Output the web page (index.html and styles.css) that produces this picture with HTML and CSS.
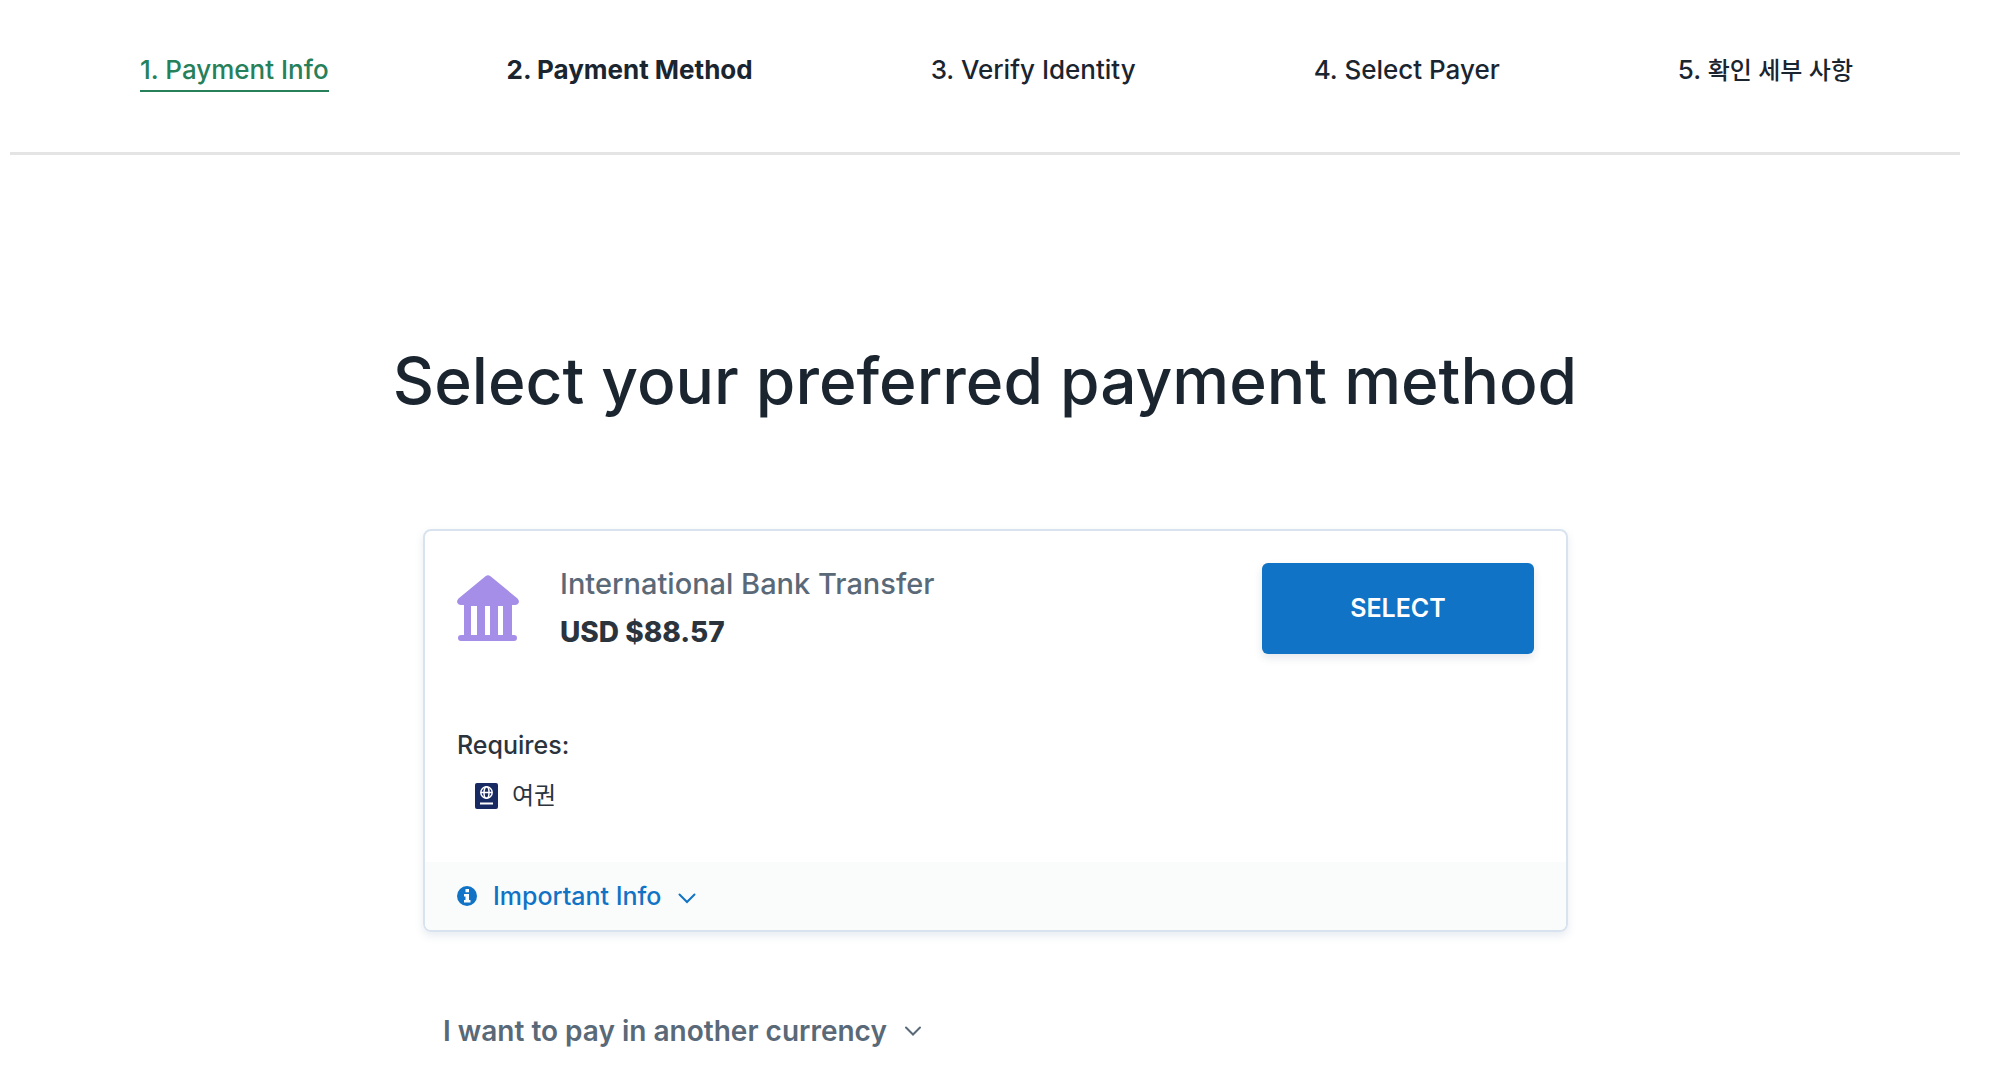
FILE: index.html
```
<!DOCTYPE html>
<html lang="en">
<head>
    <meta charset="UTF-8">
    <title>Payment Method</title>
    <link rel="stylesheet" href="styles.css">
</head>
<body>
    <nav class="steps">
        <a class="step done" href="#">1. Payment Info</a>
        <span class="step current" aria-current="step">2. Payment Method</span>
        <span class="step">3. Verify Identity</span>
        <span class="step">4. Select Payer</span>
        <span class="step">5. <span class="korean" lang="ko">확인 세부 사항</span></span>
    </nav>
    <main>
        <h1>Select your preferred payment method</h1>
        <div class="methods">
            <section class="card">
                <div class="card-top">
                    <svg class="bank-icon" viewBox="0 0 62 66" aria-hidden="true">
                        <path d="M28.500 1.200Q31 -.8 33.500 1.200L60.500 23.500Q62 25 62 27Q61 30 58 30H55V60H57Q60 60 60 63Q60 66 57 66H4Q1 66 1 63Q1 60 4 60H7V30H4Q1 30 0 27Q0 25 1.500 23.500ZM14 31V60H20V31ZM28 31V60H33V31ZM41 31V60H46V31Z" fill="#a58ee8" fill-rule="evenodd"/>
                    </svg>
                    <div class="method">
                        <h2>International Bank Transfer</h2>
                        <p class="amount">USD $88.57</p>
                    </div>
                    <button class="select" type="button">SELECT</button>
                </div>
                <div class="requires">
                    <p>Requires:</p>
                    <ul>
                        <li>
                            <svg class="passport-icon" viewBox="0 0 23 26" aria-hidden="true">
                                <rect width="23" height="26" rx="2" fill="#182a62"/>
                                <g fill="none" stroke="#fff" stroke-width="1.500">
                                    <circle cx="11.500" cy="9.500" r="5.700"/>
                                    <ellipse cx="11.500" cy="9.500" rx="2.500" ry="5.700"/>
                                    <path d="M6 9.500H17"/>
                                    <path d="M5 20.500H18" stroke-width="2"/>
                                </g>
                            </svg>
                            <span class="korean" lang="ko">여권</span>
                        </li>
                    </ul>
                </div>
                <button class="info" type="button">
                    <svg class="info-icon" viewBox="0 0 20 20" aria-hidden="true">
                        <circle cx="10" cy="10" r="10" fill="#1173c5"/>
                        <path d="M8.500 3H12V6.200H8.500ZM7 8H12V14H13.500V16.500H7V14H8.500V10.500H7Z" fill="#fafcfc"/>
                    </svg>
                    Important Info
                    <svg class="chevron" viewBox="0 0 18 18" aria-hidden="true">
                        <path d="M1.500 7.500L9 15L16.500 7.500" fill="none" stroke="currentColor" stroke-width="2" stroke-linecap="round"/>
                    </svg>
                </button>
            </section>
            <button class="currency" type="button">
                I want to pay in another currency
                <svg class="chevron" viewBox="0 0 18 18" aria-hidden="true">
                    <path d="M2 5.500L9 12.500L16 5.500" fill="none" stroke="currentColor" stroke-width="2" stroke-linecap="round"/>
                </svg>
            </button>
        </div>
    </main>
</body>
</html>
```
FILE: styles.css
```
* {
    box-sizing: border-box;
}
body {
    margin: 0;
    padding: 0 40px 0 10px;
    background: #fff;
    color: #1a2530;
    font-family: Inter, "Noto Sans CJK KR", sans-serif;
    font-size: 25px;
    line-height: 32px;
}
h1, h2, p, ul {
    margin: 0;
    padding: 0;
}
button {
    border: 0;
    background: none;
    font-family: inherit;
    cursor: pointer;
}
.korean {
    font-size: 24px;
}
.steps {
    display: flex;
    justify-content: space-between;
    align-items: flex-start;
    padding: 54px 107px 59px 130px;
    border-bottom: 3px solid #e4e4e4;
    font-size: 26px;
    font-weight: 500;
}
.step {
    padding-bottom: 4px;
    border-bottom: 2px solid transparent;
}
.done {
    color: #26805a;
    border-color: #26805a;
    text-decoration: none;
}
.current {
    font-weight: 700;
}
h1 {
    margin-top: 186px;
    font-size: 64px;
    line-height: 80px;
    font-weight: 500;
    text-align: center;
}
.methods {
    max-width: 1166px;
    margin: 108px auto 0;
    padding-left: 21px;
}
.card {
    border: 2px solid #d9e3f0;
    border-radius: 8px;
    box-shadow: 0 4px 8px rgba(60, 90, 140, 0.12);
    overflow: hidden;
}
.card-top {
    display: flex;
    align-items: center;
    padding: 29px 32px 0;
}
.bank-icon {
    width: 62px;
    height: 66px;
}
.method {
    flex: 1;
    margin-left: 41px;
}
h2 {
    color: #5a6978;
    font-size: 29px;
    line-height: 48px;
    font-weight: 500;
}
.amount {
    color: #2b343d;
    font-size: 28px;
    line-height: 48px;
    font-weight: 800;
}
.select {
    width: 272px;
    height: 91px;
    border-radius: 6px;
    background: #1173c5;
    box-shadow: 0 4px 8px rgba(30, 60, 90, 0.12);
    color: #fff;
    font-size: 25px;
    font-weight: 600;
}
.requires {
    padding: 73px 32px 50px;
    color: #2b343d;
}
.requires p {
    font-weight: 500;
}
.requires ul {
    padding: 19px 18px 0;
    list-style: none;
}
.requires li {
    display: flex;
    align-items: center;
    gap: 14px;
}
.passport-icon {
    width: 23px;
    height: 26px;
}
.info {
    display: flex;
    align-items: center;
    width: 100%;
    padding: 18px 32px;
    background: #fafcfc;
    color: #1173c5;
    font-size: 25px;
    line-height: 32px;
    font-weight: 500;
}
.info-icon {
    width: 20px;
    height: 20px;
    margin-right: 16px;
}
.chevron {
    width: 18px;
    height: 18px;
    margin-left: 17px;
}
.currency {
    display: flex;
    align-items: center;
    margin-top: 83px;
    padding: 0 20px;
    color: #5a6978;
    font-size: 28px;
    line-height: 32px;
    font-weight: 600;
}
```
